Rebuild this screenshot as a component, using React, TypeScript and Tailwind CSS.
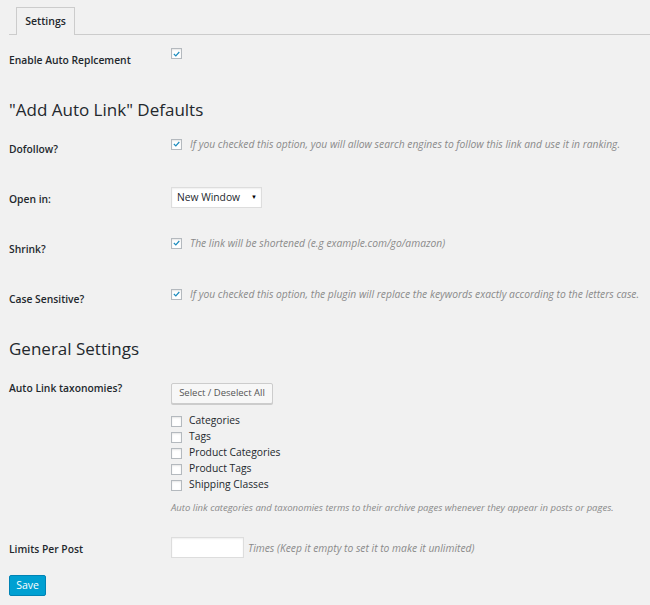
import React from "react";

const Check = ({ checked }: { checked?: boolean }) => (
  <span className="flex h-[11px] w-[11px] shrink-0 items-center justify-center border border-[#b4b9be] bg-white shadow-[inset_0_1px_2px_rgba(0,0,0,0.1)]">
    {checked && (
      <svg viewBox="0 0 20 20" className="h-[12px] w-[12px]">
        <path d="M15.2 4.6 8.4 12.2 5 9 3.2 10.9l5.4 5.1 8.6-9.5z" fill="#1e8cbe" />
      </svg>
    )}
  </span>
);

const Row = ({
  label,
  children,
  h = "h-[50px]",
  cpt = "pt-[9px]",
}: {
  label: string;
  children: React.ReactNode;
  h?: string;
  cpt?: string;
}) => (
  <div className={`flex ${h}`}>
    <div className="w-[162px] shrink-0 pt-[14px] text-[10.3px] font-semibold leading-[15px] text-[#23282d]">{label}</div>
    <div className={cpt}>{children}</div>
  </div>
);

const Desc = ({ children, size = "text-[10.3px]" }: { children: React.ReactNode; size?: string }) => (
  <span className={`whitespace-nowrap ${size} italic leading-[14px] text-[#8a8a8a]`}>{children}</span>
);

export default function App() {
  const taxonomies = ["Categories", "Tags", "Product Categories", "Product Tags", "Shipping Classes"];
  return (
    <div className="min-h-[605px] w-[650px] bg-[#f1f1f1] font-['Open_Sans',sans-serif] text-[#23282d]">
      <div className="flex pl-[9px] pt-[7px]">
        <div className="w-[7px] border-b border-[#ccc]" />
        <div className="flex h-[28px] w-[59px] items-center justify-center border border-b-0 border-[#ccc] text-[10.5px] font-semibold">
          Settings
        </div>
        <div className="flex-1 border-b border-[#ccc]" />
      </div>

      <div className="px-[9px] pt-[4px]">
        <Row label="Enable Auto Replcement">
          <Check checked />
        </Row>

        <h2 className="pb-[6px] pt-[9px] text-[17px] leading-[24px]">"Add Auto Link" Defaults</h2>

        <Row label="Dofollow?">
          <div className="flex items-center gap-[8px]">
            <Check checked />
            <Desc>If you checked this option, you will allow search engines to follow this link and use it in ranking.</Desc>
          </div>
        </Row>

        <Row label="Open in:">
          <div className="flex h-[21px] w-[91px] items-center justify-between border border-[#ddd] bg-white pl-[5px] pr-[4px] text-[10.3px] shadow-[inset_0_1px_2px_rgba(0,0,0,0.07)]">
            <span>New Window</span>
            <span className="text-[6px] text-black">▼</span>
          </div>
        </Row>

        <Row label="Shrink?" cpt="pt-[8px]">
          <div className="flex items-center gap-[8px]">
            <Check checked />
            <Desc>The link will be shortened (e.g example.com/go/amazon)</Desc>
          </div>
        </Row>

        <Row label="Case Sensitive?">
          <div className="flex items-center gap-[8px]">
            <Check checked />
            <Desc>If you checked this option, the plugin will replace the keywords exactly according to the letters case.</Desc>
          </div>
        </Row>

        <h2 className="pb-[6px] pt-[9px] text-[17px] leading-[24px]">General Settings</h2>

        <Row label="Auto Link taxonomies?" h="h-[161px]" cpt="pt-[16px]">
          <div className="flex h-[21px] w-[102px] items-center justify-center rounded-[2px] border border-[#ccc] bg-[#f7f7f7] text-[9.5px] text-[#555] shadow-[0_1px_0_#ccc]">
            Select / Deselect All
          </div>
          <div className="mt-[9px] flex flex-col">
            {taxonomies.map((t) => (
              <div key={t} className="flex h-[16px] items-center gap-[7px] text-[10.3px]">
                <Check />
                <span>{t}</span>
              </div>
            ))}
          </div>
          <div className="mt-[5px] leading-[14px]">
            <Desc size="text-[9.5px]">Auto link categories and taxonomies terms to their archive pages whenever they appear in posts or pages.</Desc>
          </div>
        </Row>

        <Row label="Limits Per Post" h="h-[30px]" cpt="pt-[9px]">
          <div className="flex items-center gap-[4px]">
            <div className="h-[21px] w-[73px] border border-[#ddd] bg-white shadow-[inset_0_1px_2px_rgba(0,0,0,0.07)]" />
            <Desc>Times (Keep it empty to set it to make it unlimited)</Desc>
          </div>
        </Row>

        <div className="pt-[17px]">
          <button className="flex h-[21px] w-[37px] items-center justify-center rounded-[2px] border border-[#0083b5] bg-[#00a0d2] text-[10.5px] text-white">
            Save
          </button>
        </div>
      </div>
    </div>
  );
}
